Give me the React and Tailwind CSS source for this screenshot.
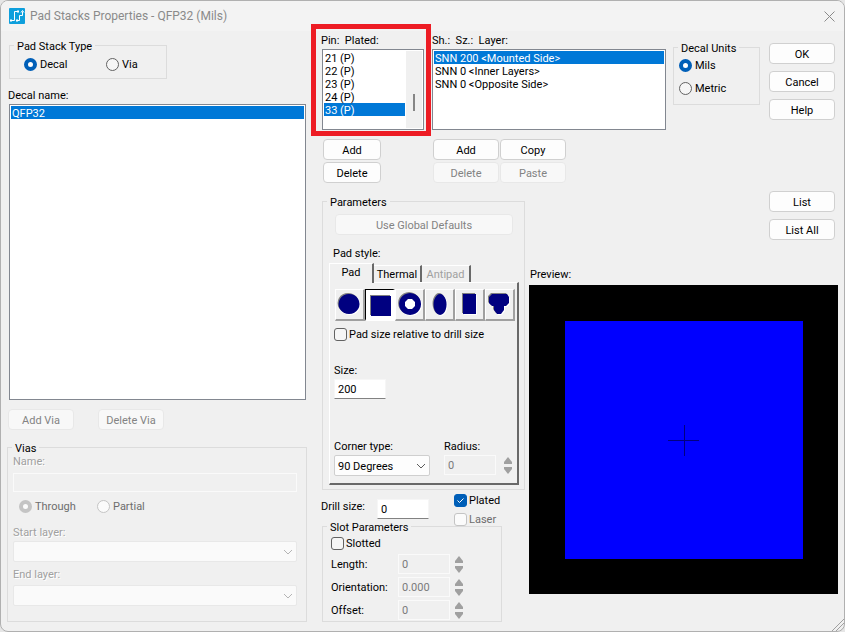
import { useState } from "react";
import clsx from "clsx";

const pins = ["21 (P)", "22 (P)", "23 (P)", "24 (P)", "33 (P)"];
const layers = ["SNN 200 <Mounted Side>", "SNN 0 <Inner Layers>", "SNN 0 <Opposite Side>"];

const padShapes = [
  { id: "round", label: "Round", d: "M13 4a10.500 10 0 1 0 .1 0z" },
  { id: "square", label: "Square", d: "M5 6h20v20H5z" },
  { id: "annular", label: "Annular", d: "M14 3a11 11 0 1 0 .1 0zM12 9l-3 3v4l3 3h4l3-3v-4l-3-3z" },
  { id: "oval", label: "Oval", d: "M14 4a6.500 10.500 0 1 0 .1 0z" },
  { id: "rect", label: "Rectangle", d: "M7 4h13v20H7z" },
  { id: "odd", label: "Odd", d: "M6 4h15l2 3v6l-3 3h-2v4l-3 4h-4l-3-4v-4H6l-3-3V7z" },
];

function Group({ title, className, children }) {
  return (
    <fieldset className={clsx("min-w-0 border border-[#dcdcdc]", className)}>
      <legend className="ml-1 h-[13px] px-[3px] leading-[15px]">{title}</legend>
      {children}
    </fieldset>
  );
}

function Button({ className, children, ...props }) {
  return (
    <button
      type="button"
      className={clsx(
        "h-[21px] rounded border border-[#d0d0d0] bg-[#fdfdfd] pt-[2px] text-center disabled:border-[#e8e8e8] disabled:bg-[#f8f8f8] disabled:text-[#838383]",
        className
      )}
      {...props}
    >
      {children}
    </button>
  );
}

function Radio({ label, disabled, className, ...props }) {
  return (
    <label className={clsx("flex h-[14px] items-center gap-[3px]", disabled && "text-[#6d6d6d]", className)}>
      <input
        type="radio"
        disabled={disabled}
        className="size-[13px] appearance-none rounded-full border border-[#626262] bg-[#f6f6f6] checked:border-4 checked:border-[#005fb8] checked:bg-white disabled:border-[#c4c4c4] disabled:bg-[#fbfbfb]"
        {...props}
      />
      <span className="pt-[2px]">{label}</span>
    </label>
  );
}

function Checkbox({ label, disabled, ...props }) {
  return (
    <label className={clsx("relative flex h-[14px] items-center gap-[2px]", disabled && "text-[#6d6d6d]")}>
      <input
        type="checkbox"
        disabled={disabled}
        className="peer size-[13px] appearance-none rounded-[3px] border border-[#626262] bg-[#f6f6f6] checked:border-[#005fb8] checked:bg-[#005fb8] disabled:border-[#c4c4c4] disabled:bg-[#fbfbfb]"
        {...props}
      />
      <svg viewBox="0 0 13 13" className="absolute left-0 hidden size-[13px] peer-checked:block" fill="none" stroke="#fff">
        <path d="M3.5 6.5l2 2l4-4" />
      </svg>
      <span className="pt-[2px]">{label}</span>
    </label>
  );
}

function ListBox({ label, items, selected, onSelect, className, children }) {
  return (
    <div className={clsx("flex border border-[#828790] bg-white p-px", className)}>
      <ul role="listbox" aria-label={label} className="min-w-0 flex-1">
        {items.map((item) => (
          <li
            key={item}
            role="option"
            aria-selected={item === selected}
            onClick={() => onSelect(item)}
            className={clsx("h-[13px] pl-px leading-[15px] whitespace-nowrap", item === selected && "bg-[#0078d7] text-white")}
          >
            {item}
          </li>
        ))}
      </ul>
      {children}
    </div>
  );
}

function Select({ children, className, disabled, ...props }) {
  return (
    <div className={clsx("relative", className)}>
      <select
        disabled={disabled}
        className="block h-[21px] w-full appearance-none rounded-xs border border-[#cfcfcf] bg-[#fdfdfd] pt-[2px] pl-[3px] opacity-100 disabled:border-[#e8e8e8] disabled:bg-[#fafafa]"
        {...props}
      >
        {children}
      </select>
      <svg
        viewBox="0 0 10 6"
        className={clsx("pointer-events-none absolute top-2 right-1 h-[6px] w-[10px]", disabled ? "text-[#b4b4b4]" : "text-[#5c5c5c]")}
        fill="none"
        stroke="currentColor"
      >
        <path d="M1 1l4 4l4-4" />
      </svg>
    </div>
  );
}

function Spinner({ name }) {
  return (
    <div className="flex flex-col gap-[3px] text-[#a0a0a0]">
      <button type="button" disabled aria-label={`Increase ${name}`}>
        <svg viewBox="0 0 8 7" className="block h-[7px] w-2" fill="currentColor"><path d="M4 0L8 5v2H0V5z" /></svg>
      </button>
      <button type="button" disabled aria-label={`Decrease ${name}`}>
        <svg viewBox="0 0 8 7" className="block h-[7px] w-2" fill="currentColor"><path d="M4 7L8 2V0H0v2z" /></svg>
      </button>
    </div>
  );
}

function NumberField({ className, ...props }) {
  return (
    <input
      type="text"
      className={clsx(
        "h-5 w-[52px] border border-x-[#f6f6f6] border-t-[#f6f6f6] border-b-[#828282] bg-white px-[3px] disabled:border-[#fafafa] disabled:bg-[#f0f0f0] disabled:text-[#7a7a7a]",
        className
      )}
      {...props}
    />
  );
}

function TitleBar() {
  return (
    <header className="flex h-[30px] items-center bg-[#f3f3f3] pr-[9px] pl-2">
      <svg viewBox="0 0 16 16" className="size-4">
        <rect width="16" height="16" rx="1" fill="#0e9fdc" />
        <g fill="none" stroke="#fff">
          <path d="M2 12.500h3.500v-9h3M8 12.500h2.500v-5h3v-4" />
          <path d="M12 4.500l1.500-2l1.500 2" />
        </g>
        <path d="M1 11.500h2v2H1zM8 2.500h2v2H8zM7 11.500h2v2H7z" fill="#fff" />
      </svg>
      <h1 className="ml-[5px] flex-1 text-[12px] text-[#8a8a8a]">Pad Stacks Properties - QFP32 (Mils)</h1>
      <button type="button" aria-label="Close">
        <svg viewBox="0 0 11 11" className="size-[11px]" fill="none" stroke="#8a8a8a">
          <path d="M.5.5l10 10M10.500.5l-10 10" />
        </svg>
      </button>
    </header>
  );
}

function DecalColumn() {
  const [type, setType] = useState("decal");
  const [decal, setDecal] = useState("QFP32");

  return (
    <section className="flex flex-col pt-2">
      <Group title="Pad Stack Type" className="ml-[2px] h-10 w-[158px]">
        <div className="mt-[5px] ml-[14px] flex">
          <Radio name="type" label="Decal" className="w-[82px]" checked={type === "decal"} onChange={() => setType("decal")} />
          <Radio name="type" label="Via" checked={type === "via"} onChange={() => setType("via")} />
        </div>
      </Group>
      <p className="mt-[9px] ml-px h-[14px]">Decal name:</p>
      <ListBox
        label="Decal name"
        items={["QFP32"]}
        selected={decal}
        onSelect={setDecal}
        className="mt-[2px] mr-px ml-[2px] flex-1"
      />
      <div className="mt-[9px] ml-px flex gap-6">
        <Button disabled className="w-[66px]">Add Via</Button>
        <Button disabled className="w-[66px]">Delete Via</Button>
      </div>
      <Group title="Vias" className="mt-[11px] h-[181px]">
        <div className="pr-[9px] pl-[5px]">
          <label htmlFor="via-name" className="block h-[14px] text-[#a0a0a0] [text-shadow:1px_1px_#fff]">Name:</label>
          <input id="via-name" type="text" disabled className="mt-[5px] block h-[19px] w-full border border-[#fafafa] bg-[#f0f0f0]" />
          <div className="mt-[7px] ml-[6px] flex">
            <Radio name="span" label="Through" disabled className="w-[78px] [&>input]:checked:border-[#c4c4c4]" defaultChecked />
            <Radio name="span" label="Partial" disabled />
          </div>
          <label htmlFor="start" className="mt-[12px] block h-[14px] text-[#a0a0a0] [text-shadow:1px_1px_#fff]">Start layer:</label>
          <Select id="start" disabled className="mt-[2px]" />
          <label htmlFor="end" className="mt-[5px] block h-[14px] text-[#a0a0a0] [text-shadow:1px_1px_#fff]">End layer:</label>
          <Select id="end" disabled className="mt-1" />
        </div>
      </Group>
    </section>
  );
}

function TopRow() {
  const [pin, setPin] = useState("33 (P)");
  const [layer, setLayer] = useState(layers[0]);
  const [units, setUnits] = useState("mils");

  return (
    <div className="flex pt-[2px] pr-[3px]">
      <div className="w-[103px]">
        <div className="relative">
          <p className="h-[14px] whitespace-pre">{"Pin:  Plated:"}</p>
          <ListBox label="Pins" items={pins} selected={pin} onSelect={setPin} className="mt-[2px] ml-px h-[81px]">
            <div className="ml-px flex w-4 justify-center bg-[#f0f0f0] pt-[43px]">
              <div className="h-[17px] w-[2px] bg-[#868686]" />
            </div>
          </ListBox>
          {/* highlight frame */}
          <div className="pointer-events-none absolute -top-[9px] -right-[7px] -bottom-[6px] -left-[10px] border-5 border-[#ed1c24]" />
        </div>
        <div className="mt-[9px] ml-[2px] flex w-[58px] flex-col gap-[2px]">
          <Button>Add</Button>
          <Button>Delete</Button>
        </div>
      </div>
      <div className="ml-2 min-w-0 flex-1">
        <p className="h-[14px] whitespace-pre">{"Sh.:  Sz.:  Layer:"}</p>
        <ListBox label="Layers" items={layers} selected={layer} onSelect={setLayer} className="mt-[2px] h-[81px]" />
        <div className="mt-[9px] ml-px grid w-[133px] grid-cols-2 gap-x-px gap-y-[2px]">
          <Button>Add</Button>
          <Button>Copy</Button>
          <Button disabled>Delete</Button>
          <Button disabled>Paste</Button>
        </div>
      </div>
      <Group title="Decal Units" className="mt-2 ml-[7px] h-16 w-[87px]">
        <div className="mt-1 ml-[5px] flex flex-col gap-[9px]">
          <Radio name="units" label="Mils" checked={units === "mils"} onChange={() => setUnits("mils")} />
          <Radio name="units" label="Metric" checked={units === "metric"} onChange={() => setUnits("metric")} />
        </div>
      </Group>
      <div className="mt-[10px] ml-[9px] flex w-[66px] flex-col gap-[7px]">
        <Button>OK</Button>
        <Button>Cancel</Button>
        <Button>Help</Button>
      </div>
    </div>
  );
}

function PadPanel() {
  const [shape, setShape] = useState("square");

  return (
    <div className="mr-[5px] ml-[6px]">
      <div role="tablist" className="mt-[3px] flex items-end">
        <button type="button" role="tab" aria-selected="true" className="z-10 -mb-px h-5 w-[45px] border-t border-r-2 border-l border-t-white border-r-[#696969] border-l-white bg-[#f0f0f0] pb-[2px]">
          Pad
        </button>
        <button type="button" role="tab" aria-selected="false" className="h-[17px] w-12 border-t border-r-2 border-t-white border-r-[#696969] pt-px">
          Thermal
        </button>
        <button type="button" role="tab" aria-selected="false" disabled className="h-[17px] w-[49px] border-t border-r-2 border-t-white border-r-[#696969] pt-px text-[#a0a0a0]">
          Antipad
        </button>
      </div>
      <div role="tabpanel" className="h-[203px] border-t border-r-2 border-b-2 border-l border-t-white border-r-[#696969] border-b-[#696969] border-l-white pt-[6px] pl-1">
        <div className="ml-px flex">
          {padShapes.map((s) => (
            <button
              key={s.id}
              type="button"
              aria-label={s.label}
              aria-pressed={shape === s.id}
              onClick={() => setShape(s.id)}
              className={clsx(
                "h-8 w-[30px] border-t border-l border-r-2 border-b-2",
                shape === s.id
                  ? "border-t-black border-r-white border-b-white border-l-black bg-white"
                  : "border-t-white border-r-[#a0a0a0] border-b-[#a0a0a0] border-l-white bg-[#f0f0f0]"
              )}
            >
              <svg viewBox="0 0 27 29" className="block h-[29px] w-[27px]" fillRule="evenodd">
                <path d={s.d} fill="#fff" transform="translate(1 1)" />
                <path d={s.d} fill="#808080" transform="translate(-1 -1)" />
                {s.id === "annular" && <path d="M9 9h10v10H9z" fill="#fff" />}
                <path d={s.d} fill="#000080" />
              </svg>
            </button>
          ))}
        </div>
        <div className="mt-[6px]">
          <Checkbox label="Pad size relative to drill size" />
        </div>
        <label htmlFor="size" className="mt-[22px] block h-[14px]">Size:</label>
        <NumberField id="size" defaultValue="200" className="mt-[2px] block" />
        <div className="mt-[40px] flex">
          <div className="w-[110px]">
            <label htmlFor="corner" className="block h-[14px]">Corner type:</label>
            <Select id="corner" className="mt-[2px] w-24">
              <option>90 Degrees</option>
              <option>Rounded</option>
              <option>Chamfered</option>
            </Select>
          </div>
          <div>
            <label htmlFor="radius" className="block h-[14px]">Radius:</label>
            <div className="mt-[2px] flex items-center gap-2">
              <NumberField id="radius" disabled defaultValue="0" />
              <Spinner name="radius" />
            </div>
          </div>
        </div>
      </div>
    </div>
  );
}

function SlotField({ id, label, value }) {
  return (
    <div className="flex h-5 items-center">
      <label htmlFor={id} className="w-[67px] pt-[2px]">{label}</label>
      <NumberField id={id} disabled defaultValue={value} />
      <div className="ml-[5px]">
        <Spinner name={id} />
      </div>
    </div>
  );
}

function ParametersColumn() {
  return (
    <div className="w-[204px] shrink-0 pt-1">
      <Group title="Parameters" className="ml-px h-[295px]">
        <div className="mt-[6px] mr-[11px] ml-[12px] flex">
          <Button disabled className="flex-1">Use Global Defaults</Button>
        </div>
        <p className="mt-[11px] ml-[10px] h-[14px]">Pad style:</p>
        <PadPanel />
      </Group>
      <div className="mt-[3px] flex h-8">
        <label htmlFor="drill" className="mt-[6px] w-14">Drill size:</label>
        <NumberField id="drill" defaultValue="0" className="mt-[6px]" />
        <div className="ml-[25px] flex flex-col gap-[5px]">
          <Checkbox label="Plated" defaultChecked />
          <Checkbox label="Laser" disabled />
        </div>
      </div>
      <Group title="Slot Parameters" className="-mt-[5px] ml-px h-[102px] w-[180px]">
        <div className="mt-[3px] ml-2">
          <Checkbox label="Slotted" />
          <div className="mt-1 flex flex-col gap-[3px]">
            <SlotField id="length" label="Length:" value="0" />
            <SlotField id="orientation" label="Orientation:" value="0.000" />
            <SlotField id="offset" label="Offset:" value="0" />
          </div>
        </div>
      </Group>
    </div>
  );
}

function PreviewColumn() {
  return (
    <div className="ml-1 flex min-w-0 flex-1 flex-col">
      <div className="mr-[3px] flex w-[66px] flex-col gap-[7px] self-end">
        <Button>List</Button>
        <Button>List All</Button>
      </div>
      <p className="mt-[27px] ml-px h-[14px]">Preview:</p>
      <svg viewBox="0 0 309 309" className="mt-1 block w-full" shapeRendering="crispEdges" role="img" aria-label="Pad preview">
        <rect width="309" height="309" fill="#000" />
        <rect x="36" y="36" width="238" height="238" fill="#00f" />
        <path d="M139 155.500h31M155.500 140v31" stroke="#000080" />
      </svg>
    </div>
  );
}

export default function App() {
  return (
    <div className="bg-[#e6e6e6]">
      <main className="relative flex min-h-screen flex-col overflow-hidden rounded-lg border border-[#b0b0b0] bg-[#f0f0f0] font-['Roboto',sans-serif] text-[11px] leading-4 text-black">
        <TitleBar />
        <div className="grid flex-1 grid-cols-[300fr_517fr] gap-x-[14px] pr-[6px] pb-[9px] pl-[6px]">
          <DecalColumn />
          <section>
            <TopRow />
            <div className="mt-2 flex">
              <ParametersColumn />
              <PreviewColumn />
            </div>
          </section>
        </div>
        {/* resize grip */}
        <svg viewBox="0 0 12 12" className="absolute right-0 bottom-0 size-3" stroke="#a0a0a0">
          <path d="M0 12L12 0M4 12l8-8M8 12l4-4" />
        </svg>
      </main>
    </div>
  );
}
